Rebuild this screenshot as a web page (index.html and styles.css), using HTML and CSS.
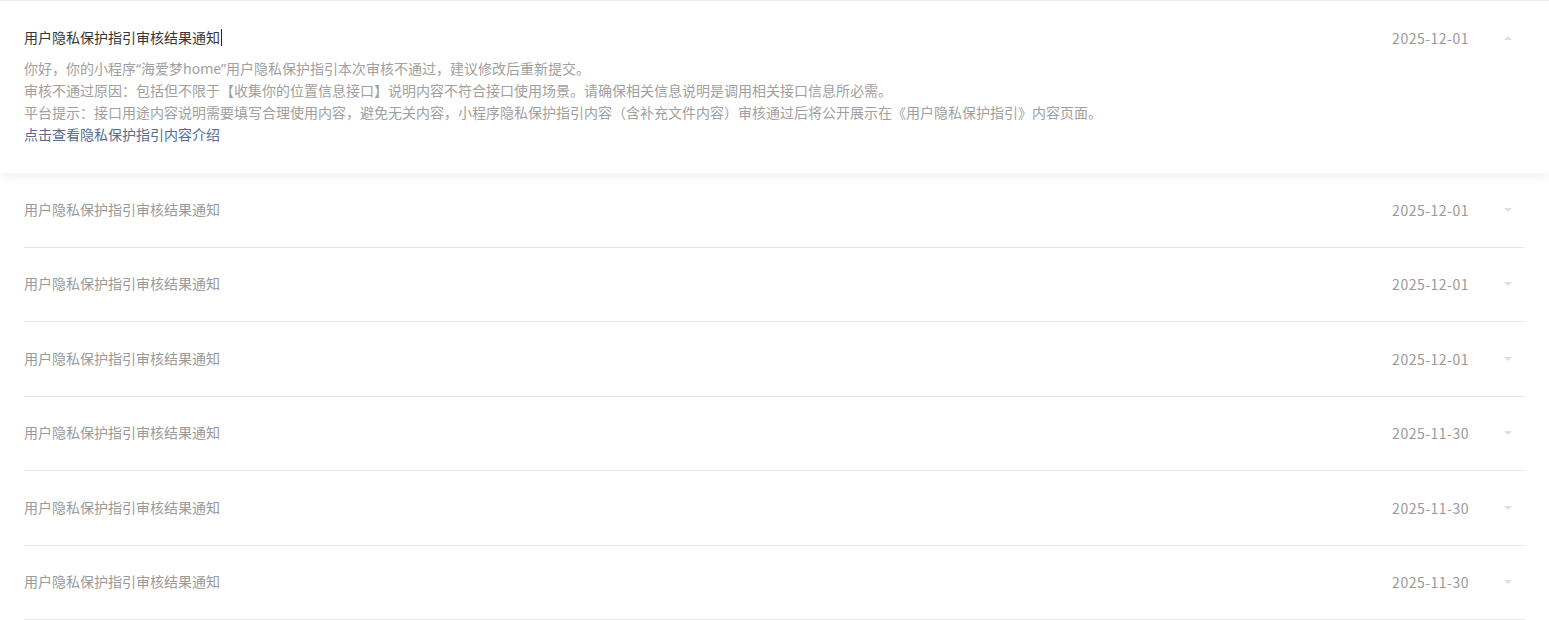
FILE: index.html
```html
<!DOCTYPE html>
<html lang="zh-CN">
<head>
  <meta charset="UTF-8">
  <title>通知</title>
  <link rel="stylesheet" href="styles.css">
</head>
<body>
  <div class="notice-list">
    <div class="notice open">
      <div class="notice-head">
        <div class="notice-title">用户隐私保护指引审核结果通知<span class="caret"></span></div>
        <div class="notice-date">2025-12-01</div>
        <div class="arrow up"></div>
      </div>
      <div class="notice-body">
        <p>你好，你的小程序“海爱梦home”用户隐私保护指引本次审核不通过，建议修改后重新提交。</p>
        <p>审核不通过原因：包括但不限于【收集你的位置信息接口】说明内容不符合接口使用场景。请确保相关信息说明是调用相关接口信息所必需。</p>
        <p>平台提示：接口用途内容说明需要填写合理使用内容，避免无关内容，小程序隐私保护指引内容（含补充文件内容）审核通过后将公开展示在《用户隐私保护指引》内容页面。</p>
        <a class="notice-link" href="#">点击查看隐私保护指引内容介绍</a>
      </div>
    </div>

    <div class="rows">
      <div class="notice-head row">
        <div class="notice-title">用户隐私保护指引审核结果通知</div>
        <div class="notice-date">2025-12-01</div>
        <div class="arrow"></div>
      </div>
      <div class="notice-head row">
        <div class="notice-title">用户隐私保护指引审核结果通知</div>
        <div class="notice-date">2025-12-01</div>
        <div class="arrow"></div>
      </div>
      <div class="notice-head row">
        <div class="notice-title">用户隐私保护指引审核结果通知</div>
        <div class="notice-date">2025-12-01</div>
        <div class="arrow"></div>
      </div>
      <div class="notice-head row">
        <div class="notice-title">用户隐私保护指引审核结果通知</div>
        <div class="notice-date">2025-11-30</div>
        <div class="arrow"></div>
      </div>
      <div class="notice-head row">
        <div class="notice-title">用户隐私保护指引审核结果通知</div>
        <div class="notice-date">2025-11-30</div>
        <div class="arrow"></div>
      </div>
      <div class="notice-head row">
        <div class="notice-title">用户隐私保护指引审核结果通知</div>
        <div class="notice-date">2025-11-30</div>
        <div class="arrow"></div>
      </div>
    </div>
  </div>
</body>
</html>
```

FILE: styles.css
```css
body {
  margin: 0;
  background: #ffffff;
  font-family: "Noto Sans", "Noto Sans CJK SC", sans-serif;
  font-size: 14px;
  color: #9a9a9a;
}
p {
  margin: 0;
}
.notice.open {
  border-top: 1px solid #ececec;
  background: #ffffff;
  padding: 27px 24px 27px;
  box-shadow: 0 4px 10px rgba(0, 0, 0, 0.06);
  position: relative;
  z-index: 1;
}
.notice-head {
  display: flex;
  align-items: center;
  line-height: 20px;
}
.notice-title {
  flex: 1;
  color: #9a9a9a;
}
.open .notice-title {
  color: #353535;
}
.caret {
  display: inline-block;
  width: 1px;
  height: 17px;
  background: #222;
  vertical-align: -3px;
  margin-left: 1px;
}
.notice-date {
  color: #9a9a9a;
  font-family: "Noto Sans CJK SC", sans-serif;
  letter-spacing: 0.5px;
  margin-right: 35px;
}
.arrow {
  width: 0;
  height: 0;
  border-left: 4px solid transparent;
  border-right: 4px solid transparent;
  border-top: 4px solid #dedede;
  margin-right: 13px;
}
.arrow.up {
  border-top: none;
  border-bottom: 4px solid #dedede;
}
.notice-body {
  margin-top: 10px;
  line-height: 22px;
  color: #a0a0a0;
}
.notice-link {
  color: #576b95;
  text-decoration: none;
}
.rows {
  padding: 0 24px;
}
.row {
  height: 73.5px;
  border-bottom: 1px solid #e7e7e7;
}
```
